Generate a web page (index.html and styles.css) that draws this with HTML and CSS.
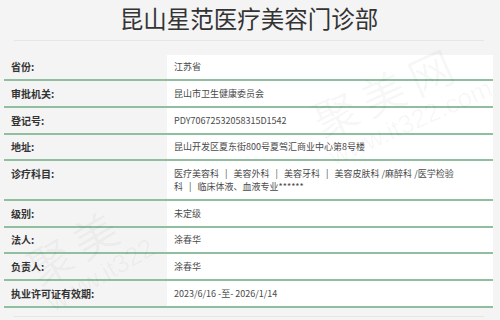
FILE: index.html
```html
<!DOCTYPE html>
<html lang="zh">
<head>
<meta charset="utf-8">
<link rel="stylesheet" href="styles.css">
</head>
<body>
<div class="page">
  <h1 class="title">昆山星范医疗美容门诊部</h1>
  <div class="info">
    <div class="row"><div class="label">省份:</div><div class="value">江苏省</div></div>
    <div class="row"><div class="label">审批机关:</div><div class="value">昆山市卫生健康委员会</div></div>
    <div class="row"><div class="label">登记号:</div><div class="value">PDY70672532058315D1542</div></div>
    <div class="row"><div class="label">地址:</div><div class="value">昆山开发区夏东街800号夏驾汇商业中心第8号楼</div></div>
    <div class="row"><div class="label">诊疗科目:</div><div class="value">医疗美容科&nbsp;&nbsp;&nbsp;|&nbsp;&nbsp;&nbsp;美容外科&nbsp;&nbsp;&nbsp;|&nbsp;&nbsp;&nbsp;美容牙科&nbsp;&nbsp;&nbsp;|&nbsp;&nbsp;&nbsp;美容皮肤科 /麻醉科 /医学检验科&nbsp;&nbsp;&nbsp;|&nbsp;&nbsp;&nbsp;临床体液、血液专业******</div></div>
    <div class="row"><div class="label">级别:</div><div class="value">未定级</div></div>
    <div class="row"><div class="label">法人:</div><div class="value">涂春华</div></div>
    <div class="row"><div class="label">负责人:</div><div class="value">涂春华</div></div>
    <div class="row"><div class="label">执业许可证有效期:</div><div class="value">2023/6/16 -至- 2026/1/14</div></div>
  </div>
  <div class="foot"></div>
  <div class="wm wm-a" aria-hidden="true"><span class="wm-big">聚美网</span><span class="wm-url">www.it322.com</span></div>
  <div class="wm wm-b" aria-hidden="true"><span class="wm-big">聚美</span><span class="wm-url">www.it322</span></div>
</div>
</body>
</html>
```

FILE: styles.css
```css
html, body {
  margin: 0;
  padding: 0;
  background: #f4f4f4;
}
.page {
  position: relative;
  width: 500px;
  height: 320px;
  overflow: hidden;
  font-family: "Noto Sans CJK SC", "Noto Sans", sans-serif;
  color: #333;
}
.title {
  margin: 0 16px 0 14px;
  height: 41px;
  line-height: 36px;
  font-size: 23.5px;
  font-weight: 400;
  text-align: center;
  color: #333;
  border-bottom: 1px solid #e6e6e6;
  box-sizing: border-box;
}
.info {
  margin: 13.5px 0 0 4px;
  width: 489px;
}
.row {
  display: grid;
  grid-template-columns: 163px 1fr;
  border-bottom: 2px solid #8fbf9f;
}
.label {
  padding: 5.85px 0 5.85px 7px;
  font-size: 10px;
  line-height: 13px;
  font-weight: 700;
  color: #333;
}
.value {
  background: #fff;
  padding: 5.85px 31px 5.85px 7px;
  font-size: 9px;
  line-height: 13px;
  color: #4a4a4a;
}
.foot {
  margin: 8px 16px 0 14px;
  border-top: 1px solid #e6e6e6;
}
.wm {
  position: absolute;
  display: flex;
  flex-direction: column;
  color: rgba(0, 0, 0, 0.04);
  pointer-events: none;
  transform-origin: left top;
  font-family: "Noto Sans CJK SC", sans-serif;
}
.wm-big {
  font-size: 44px;
  line-height: 48px;
  letter-spacing: 8px;
}
.wm-url {
  font-size: 26px;
  line-height: 30px;
  font-family: "Liberation Sans", sans-serif;
}
.wm-a {
  left: 305px;
  top: 100px;
  transform: rotate(-24deg);
}
.wm-b {
  left: 18px;
  top: 250px;
  transform: rotate(-30deg);
}
```
